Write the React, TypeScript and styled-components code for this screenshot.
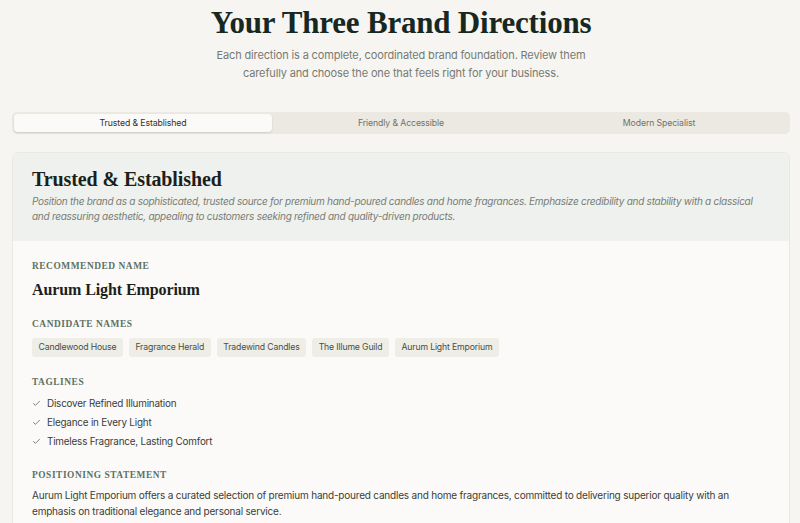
import React, { useState } from 'react'
import styled, { createGlobalStyle } from 'styled-components'

const GlobalStyle = createGlobalStyle`
    html, body {
        margin: 0;
        padding: 0;
        background: #f6f5f1;
    }
    body {
        font-family: "Inter", "Noto Sans", sans-serif;
        color: #2b2f2b;
        letter-spacing: -0.15px;
    }
    * { box-sizing: border-box; }
`

const serif = `"Liberation Serif", "DejaVu Serif", serif`

const Page = styled.div`
    padding: 3px 10px 0 12px;
`

const Hero = styled.header`
    display: grid;
    justify-items: center;
    text-align: center;
`

const HeroTitle = styled.h1`
    margin: 0;
    font-family: ${serif};
    font-size: 31px;
    font-weight: 700;
    letter-spacing: -0.2px;
    line-height: 40px;
    color: #16281f;
`

const HeroText = styled.p`
    margin: 3px 0 0;
    max-width: 382px;
    font-size: 11px;
    line-height: 18px;
    color: #777a73;
`

const Tabs = styled.div`
    display: grid;
    grid-template-columns: repeat(3, 1fr);
    margin-top: 30px;
    padding: 2px;
    height: 22px;
    border-radius: 5px;
    background: #ebe9e2;
`

const Tab = styled.button<{ active?: boolean }>`
    border: none;
    font-family: inherit;
    font-size: 8.7px;
    letter-spacing: -0.1px;
    color: ${p => p.active ? '#2d302c' : '#707269'};
    background: ${p => p.active ? '#fbfaf8' : 'transparent'};
    border-radius: 4px;
    box-shadow: ${p => p.active ? '0 1px 2px rgba(0,0,0,0.12)' : 'none'};
    cursor: pointer;
    padding: 0;
`

const Card = styled.section`
    margin-top: 18px;
    border: 1px solid #e9e8e2;
    border-radius: 6px;
    overflow: hidden;
    background: #fbfaf8;
`

const CardHeader = styled.div`
    background: #eef1ed;
    padding: 13px 19px 17px;
`

const CardTitle = styled.h2`
    margin: 0;
    font-family: ${serif};
    font-size: 20px;
    font-weight: 700;
    letter-spacing: -0.1px;
    color: #1c1f1b;
    line-height: 26px;
`

const CardLead = styled.p`
    margin: 2px 0 0;
    font-size: 10px;
    font-style: italic;
    letter-spacing: -0.27px;
    line-height: 15px;
    color: #797c76;
`

const CardBody = styled.div`
    padding: 19px 19px 10px;
    display: grid;
    row-gap: 18px;
`

const Section = styled.div<{ labelGap?: number; push?: number }>`
    display: grid;
    row-gap: ${p => p.labelGap ?? 7}px;
    margin-top: ${p => p.push ?? 0}px;
`

const Label = styled.h3`
    margin: 0;
    font-family: ${serif};
    font-size: 9.4px;
    font-weight: 700;
    letter-spacing: 0.55px;
    text-transform: uppercase;
    color: #5d7062;
    line-height: 12px;
`

const BigName = styled.div`
    font-family: ${serif};
    font-size: 16px;
    font-weight: 700;
    color: #1c1f1b;
    letter-spacing: -0.1px;
    line-height: 21px;
`

const ChipRow = styled.div`
    display: flex;
    flex-wrap: wrap;
    gap: 6px;
`

const Chip = styled.span`
    display: inline-block;
    padding: 0 6.5px;
    height: 19px;
    line-height: 19px;
    font-size: 8.7px;
    letter-spacing: -0.15px;
    color: #4a4d47;
    background: #eeede6;
    border-radius: 3px;
`

const List = styled.ul`
    list-style: none;
    margin: 0;
    padding: 0;
    display: grid;
    row-gap: 4px;
`

const Item = styled.li`
    display: flex;
    align-items: center;
    gap: 6px;
    font-size: 9.9px;
    letter-spacing: -0.2px;
    line-height: 15px;
    color: #3a3d38;
`

const Statement = styled.p`
    margin: 0;
    font-size: 10px;
    letter-spacing: -0.2px;
    line-height: 16px;
    color: #3a3d38;
`

const Check = () => (
    <svg width="9" height="9" viewBox="0 0 24 24" fill="none" stroke="#5b6b5e" strokeWidth="2.2" strokeLinecap="round" strokeLinejoin="round">
        <path d="M20 6 9 17l-5-5" />
    </svg>
)

const tabs = ['Trusted & Established', 'Friendly & Accessible', 'Modern Specialist']
const candidates = ['Candlewood House', 'Fragrance Herald', 'Tradewind Candles', 'The Illume Guild', 'Aurum Light Emporium']
const taglines = ['Discover Refined Illumination', 'Elegance in Every Light', 'Timeless Fragrance, Lasting Comfort']

const App = () => {
    const [active, setActive] = useState(0)

    return (
        <Page>
            <GlobalStyle />
            <Hero>
                <HeroTitle>Your Three Brand Directions</HeroTitle>
                <HeroText>
                    Each direction is a complete, coordinated brand foundation. Review them carefully and choose the one that feels right for your business.
                </HeroText>
            </Hero>
            <Tabs>
                {tabs.map((t, i) =>
                    <Tab key={t} active={i === active} onClick={() => setActive(i)}>{t}</Tab>
                )}
            </Tabs>
            <Card>
                <CardHeader>
                    <CardTitle>Trusted &amp; Established</CardTitle>
                    <CardLead>
                        Position the brand as a sophisticated, trusted source for premium hand-poured candles and home fragrances. Emphasize credibility and stability with a classical and reassuring aesthetic, appealing to customers seeking refined and quality-driven products.
                    </CardLead>
                </CardHeader>
                <CardBody>
                    <Section>
                        <Label>Recommended Name</Label>
                        <BigName>Aurum Light Emporium</BigName>
                    </Section>
                    <Section labelGap={8}>
                        <Label>Candidate Names</Label>
                        <ChipRow>
                            {candidates.map(c => <Chip key={c}>{c}</Chip>)}
                        </ChipRow>
                    </Section>
                    <Section labelGap={8} push={1}>
                        <Label>Taglines</Label>
                        <List>
                            {taglines.map(t => <Item key={t}><Check />{t}</Item>)}
                        </List>
                    </Section>
                    <Section labelGap={6} push={2}>
                        <Label>Positioning Statement</Label>
                        <Statement>
                            Aurum Light Emporium offers a curated selection of premium hand-poured candles and home fragrances, committed to delivering superior quality with an emphasis on traditional elegance and personal service.
                        </Statement>
                    </Section>
                </CardBody>
            </Card>
        </Page>
    )
}

export default App
